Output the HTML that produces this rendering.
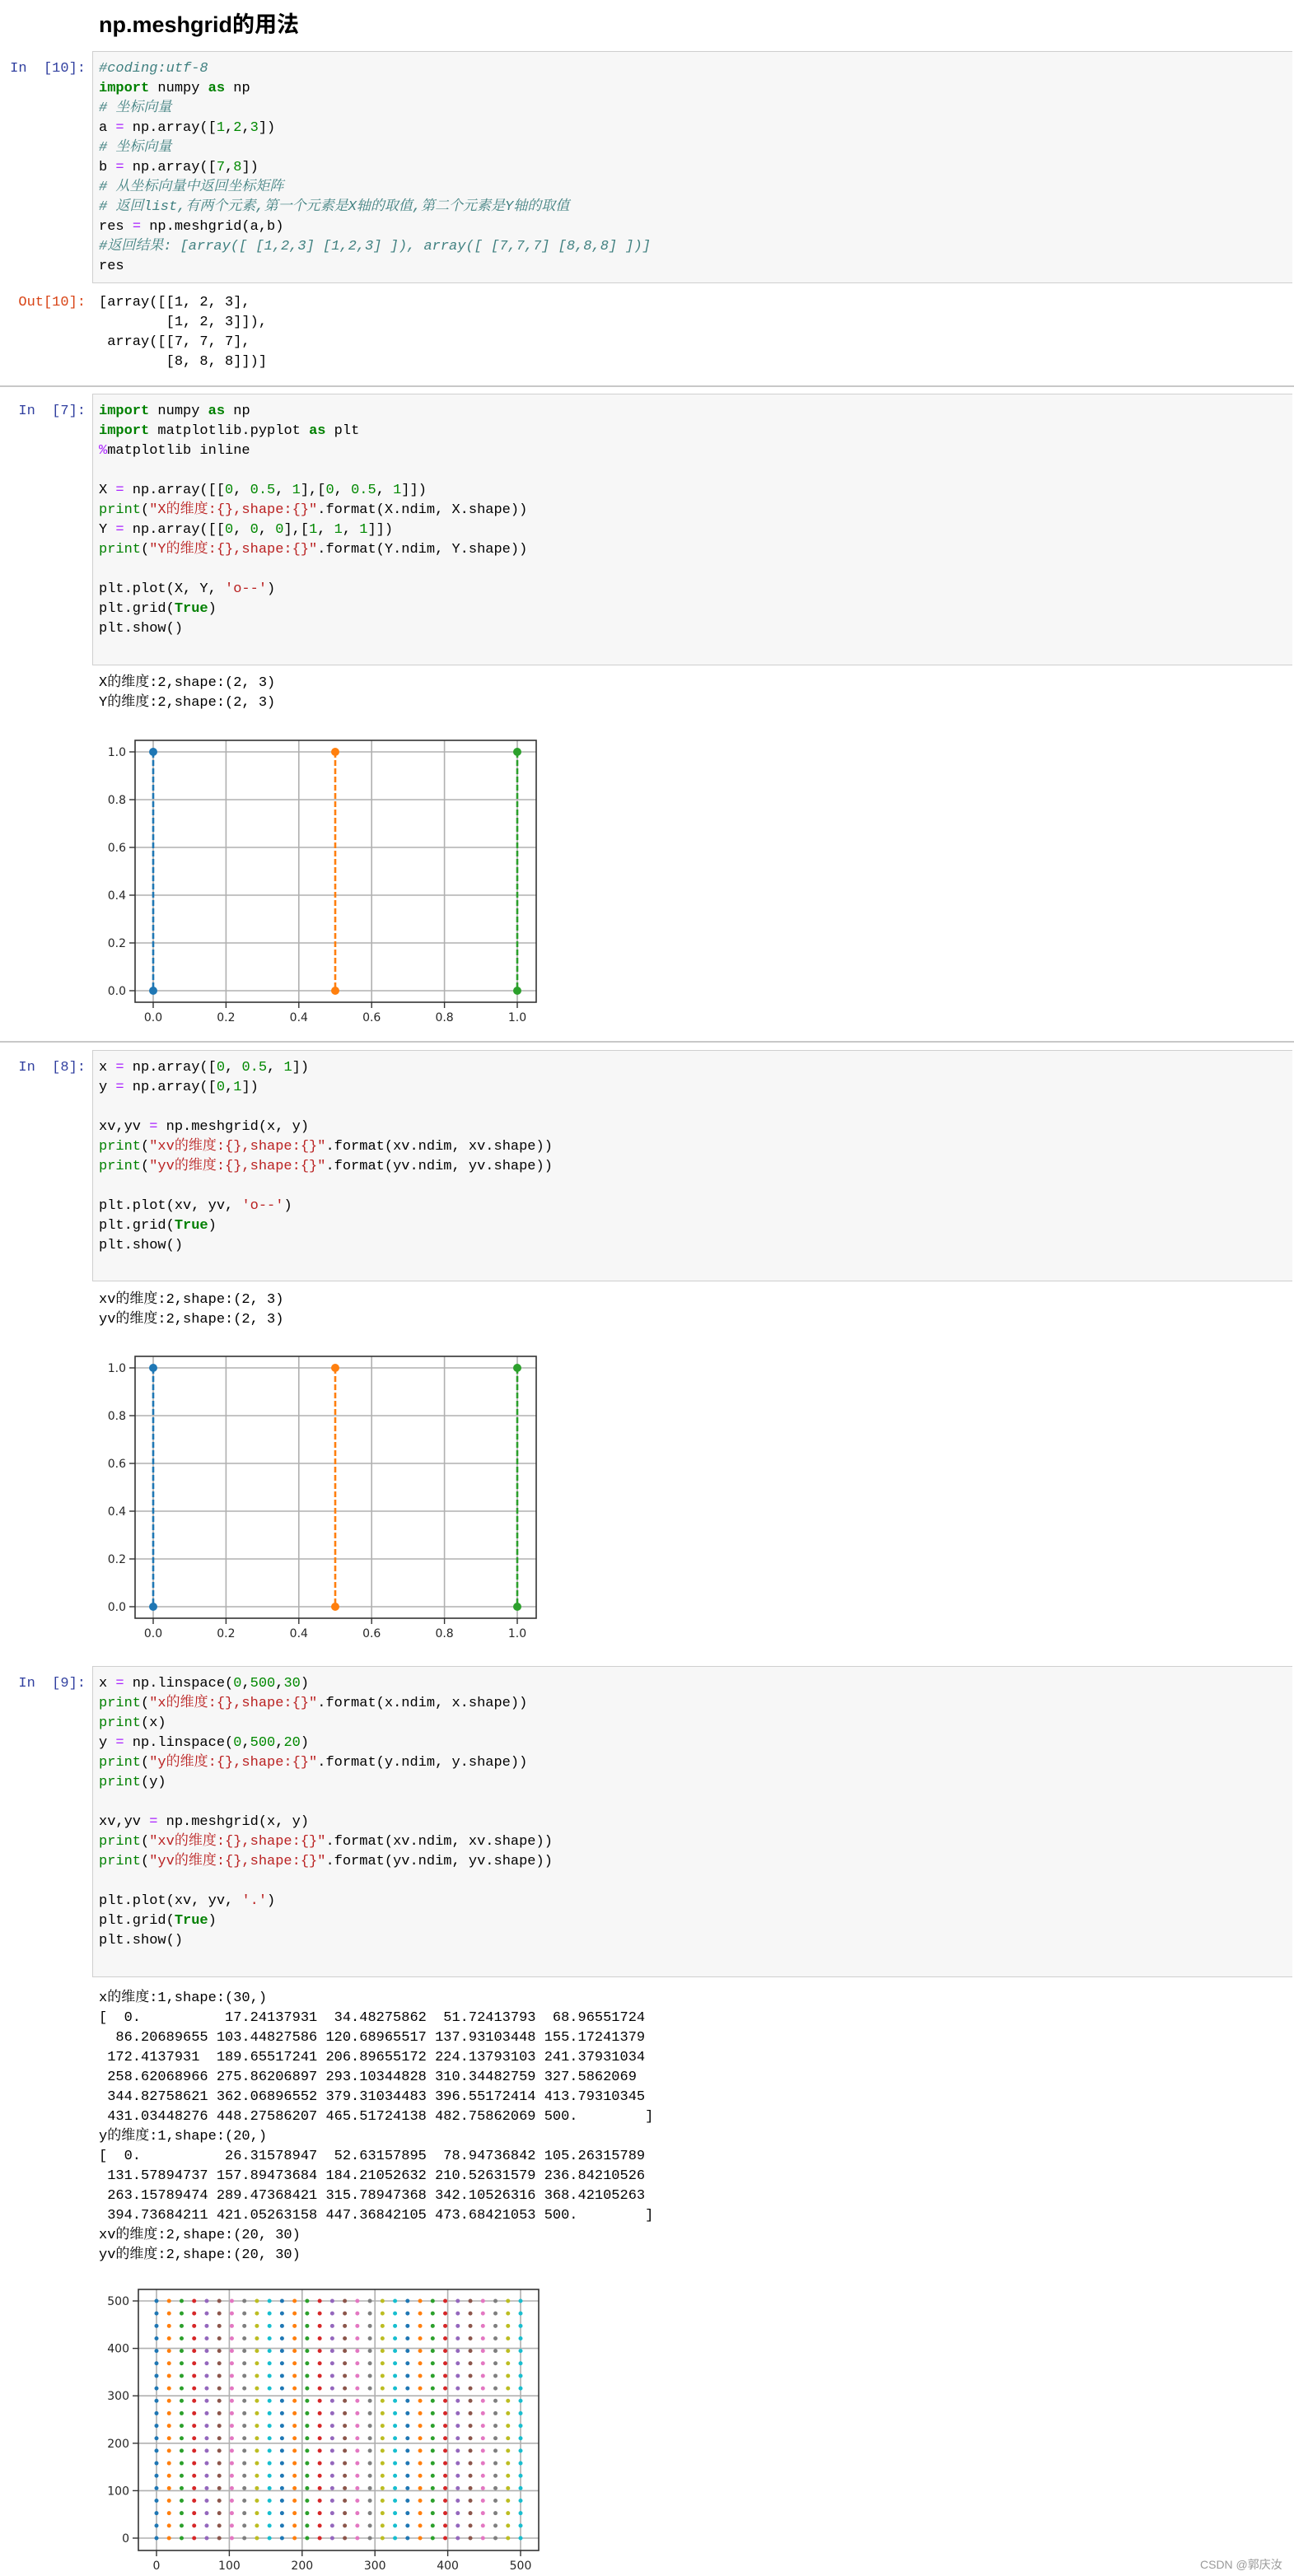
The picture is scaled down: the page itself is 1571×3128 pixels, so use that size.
<!DOCTYPE html>
<html><head><meta charset="utf-8">
<style>
body{margin:0;background:#fff;width:1571px;height:3128px;position:relative;overflow:hidden;font-family:"Liberation Mono","Noto Serif CJK SC",monospace;}
.t{position:absolute;left:120px;top:8px;font:bold 27px "Liberation Sans","Noto Sans CJK SC",sans-serif;color:#000;}
.box{position:absolute;left:112px;width:1457px;background:#f7f7f7;border:1px solid #cfcfcf;border-right:none;box-sizing:border-box;}
pre{position:absolute;margin:0;font-family:"Liberation Mono","Noto Serif CJK SC",monospace;font-size:17px;line-height:24px;color:#000;white-space:pre;}
.code{left:120px;}
.pr{position:absolute;left:0;width:104px;text-align:right;font-size:17px;line-height:24px;white-space:pre;}
.in{color:#303F9F}.out{color:#D84315}
.k{color:#008000;font-weight:bold}.c{color:#408080;font-style:italic}.n{color:#080}.s{color:#BA2121}.o{color:#AA22FF}.b{color:#008000}
.sep{position:absolute;left:0;width:1571px;height:2px;background:#c8c8c8;}
svg{position:absolute;overflow:visible;}
svg text{font-family:"DejaVu Sans",sans-serif;font-size:14px;fill:#262626;}
.wm{position:absolute;left:1457px;top:3104px;font:14px "Liberation Sans","Noto Sans CJK SC",sans-serif;color:#999;}
</style></head><body>
<div class="t">np.meshgrid的用法</div>

<div class="box" style="top:62px;height:282px"></div>
<div class="pr in" style="top:72px">In  [10]:</div>
<pre class="code" style="top:72px"><span class="c">#coding:utf-8</span>
<span class="k">import</span> numpy <span class="k">as</span> np
<span class="c"># 坐标向量</span>
a <span class="o">=</span> np.array([<span class="n">1</span>,<span class="n">2</span>,<span class="n">3</span>])
<span class="c"># 坐标向量</span>
b <span class="o">=</span> np.array([<span class="n">7</span>,<span class="n">8</span>])
<span class="c"># 从坐标向量中返回坐标矩阵</span>
<span class="c"># 返回list,有两个元素,第一个元素是X轴的取值,第二个元素是Y轴的取值</span>
res <span class="o">=</span> np.meshgrid(a,b)
<span class="c">#返回结果: [array([ [1,2,3] [1,2,3] ]), array([ [7,7,7] [8,8,8] ])]</span>
res</pre>
<div class="pr out" style="top:356px">Out[10]:</div>
<pre class="code" style="top:356px">[array([[1, 2, 3],
        [1, 2, 3]]),
 array([[7, 7, 7],
        [8, 8, 8]])]</pre>
<div class="sep" style="top:468px"></div>

<div class="box" style="top:478px;height:330px"></div>
<div class="pr in" style="top:488px">In  [7]:</div>
<pre class="code" style="top:488px"><span class="k">import</span> numpy <span class="k">as</span> np
<span class="k">import</span> matplotlib.pyplot <span class="k">as</span> plt
<span class="o">%</span>matplotlib inline

X <span class="o">=</span> np.array([[<span class="n">0</span>, <span class="n">0.5</span>, <span class="n">1</span>],[<span class="n">0</span>, <span class="n">0.5</span>, <span class="n">1</span>]])
<span class="b">print</span>(<span class="s">"X的维度:{},shape:{}"</span>.format(X.ndim, X.shape))
Y <span class="o">=</span> np.array([[<span class="n">0</span>, <span class="n">0</span>, <span class="n">0</span>],[<span class="n">1</span>, <span class="n">1</span>, <span class="n">1</span>]])
<span class="b">print</span>(<span class="s">"Y的维度:{},shape:{}"</span>.format(Y.ndim, Y.shape))

plt.plot(X, Y, <span class="s">'o--'</span>)
plt.grid(<span class="k">True</span>)
plt.show()</pre>
<pre class="code" style="top:818px">X的维度:2,shape:(2, 3)
Y的维度:2,shape:(2, 3)</pre>

<svg style="left:164px;top:899px" width="487" height="318">
<g stroke="#b0b0b0" stroke-width="1.6">
<line x1="22" y1="0" x2="22" y2="318"/><line x1="110.4" y1="0" x2="110.4" y2="318"/><line x1="198.8" y1="0" x2="198.8" y2="318"/><line x1="287.2" y1="0" x2="287.2" y2="318"/><line x1="375.6" y1="0" x2="375.6" y2="318"/><line x1="464" y1="0" x2="464" y2="318"/>
<line x1="0" y1="14" x2="487" y2="14"/><line x1="0" y1="72" x2="487" y2="72"/><line x1="0" y1="130" x2="487" y2="130"/><line x1="0" y1="188" x2="487" y2="188"/><line x1="0" y1="246" x2="487" y2="246"/><line x1="0" y1="304" x2="487" y2="304"/>
</g>
<g stroke="#333" stroke-width="1.4">
<line x1="22" y1="318" x2="22" y2="325"/><line x1="110.4" y1="318" x2="110.4" y2="325"/><line x1="198.8" y1="318" x2="198.8" y2="325"/><line x1="287.2" y1="318" x2="287.2" y2="325"/><line x1="375.6" y1="318" x2="375.6" y2="325"/><line x1="464" y1="318" x2="464" y2="325"/>
<line x1="-7" y1="14" x2="0" y2="14"/><line x1="-7" y1="72" x2="0" y2="72"/><line x1="-7" y1="130" x2="0" y2="130"/><line x1="-7" y1="188" x2="0" y2="188"/><line x1="-7" y1="246" x2="0" y2="246"/><line x1="-7" y1="304" x2="0" y2="304"/>
</g>
<g stroke-width="2.6" stroke-dasharray="7,3">
<line x1="22" y1="14" x2="22" y2="304" stroke="#1f77b4"/><line x1="243" y1="14" x2="243" y2="304" stroke="#ff7f0e"/><line x1="464" y1="14" x2="464" y2="304" stroke="#2ca02c"/>
</g>
<circle cx="22" cy="14" r="5" fill="#1f77b4"/><circle cx="22" cy="304" r="5" fill="#1f77b4"/>
<circle cx="243" cy="14" r="5" fill="#ff7f0e"/><circle cx="243" cy="304" r="5" fill="#ff7f0e"/>
<circle cx="464" cy="14" r="5" fill="#2ca02c"/><circle cx="464" cy="304" r="5" fill="#2ca02c"/>
<rect x="0" y="0" width="487" height="318" fill="none" stroke="#333" stroke-width="1.6"/>
<g text-anchor="end"><text x="-11" y="19">1.0</text><text x="-11" y="77">0.8</text><text x="-11" y="135">0.6</text><text x="-11" y="193">0.4</text><text x="-11" y="251">0.2</text><text x="-11" y="309">0.0</text></g>
<g text-anchor="middle"><text x="22" y="341">0.0</text><text x="110.4" y="341">0.2</text><text x="198.8" y="341">0.4</text><text x="287.2" y="341">0.6</text><text x="375.6" y="341">0.8</text><text x="464" y="341">1.0</text></g>
</svg>
<div class="sep" style="top:1264px"></div>

<div class="box" style="top:1275px;height:281px"></div>
<div class="pr in" style="top:1285px">In  [8]:</div>
<pre class="code" style="top:1285px">x <span class="o">=</span> np.array([<span class="n">0</span>, <span class="n">0.5</span>, <span class="n">1</span>])
y <span class="o">=</span> np.array([<span class="n">0</span>,<span class="n">1</span>])

xv,yv <span class="o">=</span> np.meshgrid(x, y)
<span class="b">print</span>(<span class="s">"xv的维度:{},shape:{}"</span>.format(xv.ndim, xv.shape))
<span class="b">print</span>(<span class="s">"yv的维度:{},shape:{}"</span>.format(yv.ndim, yv.shape))

plt.plot(xv, yv, <span class="s">'o--'</span>)
plt.grid(<span class="k">True</span>)
plt.show()</pre>
<pre class="code" style="top:1567px">xv的维度:2,shape:(2, 3)
yv的维度:2,shape:(2, 3)</pre>

<svg style="left:164px;top:1647px" width="487" height="318">
<g stroke="#b0b0b0" stroke-width="1.6">
<line x1="22" y1="0" x2="22" y2="318"/><line x1="110.4" y1="0" x2="110.4" y2="318"/><line x1="198.8" y1="0" x2="198.8" y2="318"/><line x1="287.2" y1="0" x2="287.2" y2="318"/><line x1="375.6" y1="0" x2="375.6" y2="318"/><line x1="464" y1="0" x2="464" y2="318"/>
<line x1="0" y1="14" x2="487" y2="14"/><line x1="0" y1="72" x2="487" y2="72"/><line x1="0" y1="130" x2="487" y2="130"/><line x1="0" y1="188" x2="487" y2="188"/><line x1="0" y1="246" x2="487" y2="246"/><line x1="0" y1="304" x2="487" y2="304"/>
</g>
<g stroke="#333" stroke-width="1.4">
<line x1="22" y1="318" x2="22" y2="325"/><line x1="110.4" y1="318" x2="110.4" y2="325"/><line x1="198.8" y1="318" x2="198.8" y2="325"/><line x1="287.2" y1="318" x2="287.2" y2="325"/><line x1="375.6" y1="318" x2="375.6" y2="325"/><line x1="464" y1="318" x2="464" y2="325"/>
<line x1="-7" y1="14" x2="0" y2="14"/><line x1="-7" y1="72" x2="0" y2="72"/><line x1="-7" y1="130" x2="0" y2="130"/><line x1="-7" y1="188" x2="0" y2="188"/><line x1="-7" y1="246" x2="0" y2="246"/><line x1="-7" y1="304" x2="0" y2="304"/>
</g>
<g stroke-width="2.6" stroke-dasharray="7,3">
<line x1="22" y1="14" x2="22" y2="304" stroke="#1f77b4"/><line x1="243" y1="14" x2="243" y2="304" stroke="#ff7f0e"/><line x1="464" y1="14" x2="464" y2="304" stroke="#2ca02c"/>
</g>
<circle cx="22" cy="14" r="5" fill="#1f77b4"/><circle cx="22" cy="304" r="5" fill="#1f77b4"/>
<circle cx="243" cy="14" r="5" fill="#ff7f0e"/><circle cx="243" cy="304" r="5" fill="#ff7f0e"/>
<circle cx="464" cy="14" r="5" fill="#2ca02c"/><circle cx="464" cy="304" r="5" fill="#2ca02c"/>
<rect x="0" y="0" width="487" height="318" fill="none" stroke="#333" stroke-width="1.6"/>
<g text-anchor="end"><text x="-11" y="19">1.0</text><text x="-11" y="77">0.8</text><text x="-11" y="135">0.6</text><text x="-11" y="193">0.4</text><text x="-11" y="251">0.2</text><text x="-11" y="309">0.0</text></g>
<g text-anchor="middle"><text x="22" y="341">0.0</text><text x="110.4" y="341">0.2</text><text x="198.8" y="341">0.4</text><text x="287.2" y="341">0.6</text><text x="375.6" y="341">0.8</text><text x="464" y="341">1.0</text></g>
</svg>

<div class="box" style="top:2023px;height:378px"></div>
<div class="pr in" style="top:2033px">In  [9]:</div>
<pre class="code" style="top:2033px">x <span class="o">=</span> np.linspace(<span class="n">0</span>,<span class="n">500</span>,<span class="n">30</span>)
<span class="b">print</span>(<span class="s">"x的维度:{},shape:{}"</span>.format(x.ndim, x.shape))
<span class="b">print</span>(x)
y <span class="o">=</span> np.linspace(<span class="n">0</span>,<span class="n">500</span>,<span class="n">20</span>)
<span class="b">print</span>(<span class="s">"y的维度:{},shape:{}"</span>.format(y.ndim, y.shape))
<span class="b">print</span>(y)

xv,yv <span class="o">=</span> np.meshgrid(x, y)
<span class="b">print</span>(<span class="s">"xv的维度:{},shape:{}"</span>.format(xv.ndim, xv.shape))
<span class="b">print</span>(<span class="s">"yv的维度:{},shape:{}"</span>.format(yv.ndim, yv.shape))

plt.plot(xv, yv, <span class="s">'.'</span>)
plt.grid(<span class="k">True</span>)
plt.show()</pre>
<pre class="code" style="top:2415px">x的维度:1,shape:(30,)
[  0.          17.24137931  34.48275862  51.72413793  68.96551724
  86.20689655 103.44827586 120.68965517 137.93103448 155.17241379
 172.4137931  189.65517241 206.89655172 224.13793103 241.37931034
 258.62068966 275.86206897 293.10344828 310.34482759 327.5862069
 344.82758621 362.06896552 379.31034483 396.55172414 413.79310345
 431.03448276 448.27586207 465.51724138 482.75862069 500.        ]
y的维度:1,shape:(20,)
[  0.          26.31578947  52.63157895  78.94736842 105.26315789
 131.57894737 157.89473684 184.21052632 210.52631579 236.84210526
 263.15789474 289.47368421 315.78947368 342.10526316 368.42105263
 394.73684211 421.05263158 447.36842105 473.68421053 500.        ]
xv的维度:2,shape:(20, 30)
yv的维度:2,shape:(20, 30)</pre>

<svg style="left:168px;top:2780px" width="486" height="317">
<g stroke="#b0b0b0" stroke-width="1.6">
<line x1="22" y1="0" x2="22" y2="317"/><line x1="110.4" y1="0" x2="110.4" y2="317"/><line x1="198.8" y1="0" x2="198.8" y2="317"/><line x1="287.2" y1="0" x2="287.2" y2="317"/><line x1="375.6" y1="0" x2="375.6" y2="317"/><line x1="464" y1="0" x2="464" y2="317"/>
<line x1="0" y1="14" x2="486" y2="14"/><line x1="0" y1="71.6" x2="486" y2="71.6"/><line x1="0" y1="129.2" x2="486" y2="129.2"/><line x1="0" y1="186.8" x2="486" y2="186.8"/><line x1="0" y1="244.4" x2="486" y2="244.4"/><line x1="0" y1="302" x2="486" y2="302"/>
</g>
<g stroke="#333" stroke-width="1.4">
<line x1="22" y1="317" x2="22" y2="324"/><line x1="110.4" y1="317" x2="110.4" y2="324"/><line x1="198.8" y1="317" x2="198.8" y2="324"/><line x1="287.2" y1="317" x2="287.2" y2="324"/><line x1="375.6" y1="317" x2="375.6" y2="324"/><line x1="464" y1="317" x2="464" y2="324"/>
<line x1="-7" y1="14" x2="0" y2="14"/><line x1="-7" y1="71.6" x2="0" y2="71.6"/><line x1="-7" y1="129.2" x2="0" y2="129.2"/><line x1="-7" y1="186.8" x2="0" y2="186.8"/><line x1="-7" y1="244.4" x2="0" y2="244.4"/><line x1="-7" y1="302" x2="0" y2="302"/>
</g>
<g stroke-width="5" stroke-linecap="round" stroke-dasharray="0 15.158">
<line x1="22" y1="302" x2="22" y2="10" stroke="#1f77b4"/>
<line x1="37.24" y1="302" x2="37.24" y2="10" stroke="#ff7f0e"/>
<line x1="52.48" y1="302" x2="52.48" y2="10" stroke="#2ca02c"/>
<line x1="67.72" y1="302" x2="67.72" y2="10" stroke="#d62728"/>
<line x1="82.97" y1="302" x2="82.97" y2="10" stroke="#9467bd"/>
<line x1="98.21" y1="302" x2="98.21" y2="10" stroke="#8c564b"/>
<line x1="113.45" y1="302" x2="113.45" y2="10" stroke="#e377c2"/>
<line x1="128.69" y1="302" x2="128.69" y2="10" stroke="#7f7f7f"/>
<line x1="143.93" y1="302" x2="143.93" y2="10" stroke="#bcbd22"/>
<line x1="159.17" y1="302" x2="159.17" y2="10" stroke="#17becf"/>
<line x1="174.41" y1="302" x2="174.41" y2="10" stroke="#1f77b4"/>
<line x1="189.66" y1="302" x2="189.66" y2="10" stroke="#ff7f0e"/>
<line x1="204.9" y1="302" x2="204.9" y2="10" stroke="#2ca02c"/>
<line x1="220.14" y1="302" x2="220.14" y2="10" stroke="#d62728"/>
<line x1="235.38" y1="302" x2="235.38" y2="10" stroke="#9467bd"/>
<line x1="250.62" y1="302" x2="250.62" y2="10" stroke="#8c564b"/>
<line x1="265.86" y1="302" x2="265.86" y2="10" stroke="#e377c2"/>
<line x1="281.1" y1="302" x2="281.1" y2="10" stroke="#7f7f7f"/>
<line x1="296.34" y1="302" x2="296.34" y2="10" stroke="#bcbd22"/>
<line x1="311.59" y1="302" x2="311.59" y2="10" stroke="#17becf"/>
<line x1="326.83" y1="302" x2="326.83" y2="10" stroke="#1f77b4"/>
<line x1="342.07" y1="302" x2="342.07" y2="10" stroke="#ff7f0e"/>
<line x1="357.31" y1="302" x2="357.31" y2="10" stroke="#2ca02c"/>
<line x1="372.55" y1="302" x2="372.55" y2="10" stroke="#d62728"/>
<line x1="387.79" y1="302" x2="387.79" y2="10" stroke="#9467bd"/>
<line x1="403.03" y1="302" x2="403.03" y2="10" stroke="#8c564b"/>
<line x1="418.28" y1="302" x2="418.28" y2="10" stroke="#e377c2"/>
<line x1="433.52" y1="302" x2="433.52" y2="10" stroke="#7f7f7f"/>
<line x1="448.76" y1="302" x2="448.76" y2="10" stroke="#bcbd22"/>
<line x1="464" y1="302" x2="464" y2="10" stroke="#17becf"/>
</g>
<rect x="0" y="0" width="486" height="317" fill="none" stroke="#333" stroke-width="1.6"/>
<g text-anchor="end"><text x="-11" y="19">500</text><text x="-11" y="76.6">400</text><text x="-11" y="134.2">300</text><text x="-11" y="191.8">200</text><text x="-11" y="249.4">100</text><text x="-11" y="307">0</text></g>
<g text-anchor="middle"><text x="22" y="340">0</text><text x="110.4" y="340">100</text><text x="198.8" y="340">200</text><text x="287.2" y="340">300</text><text x="375.6" y="340">400</text><text x="464" y="340">500</text></g>
</svg>

<div class="wm">CSDN @郭庆汝</div>
</body></html>
